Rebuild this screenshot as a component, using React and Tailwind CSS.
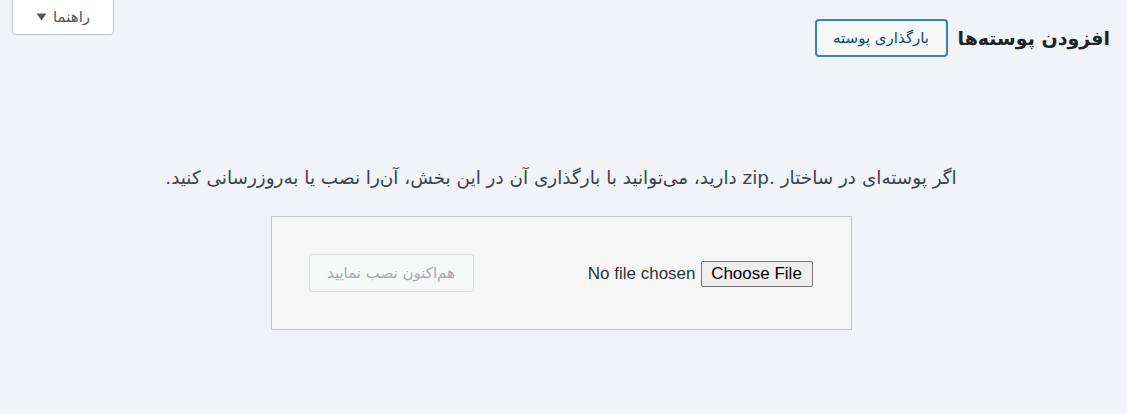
export default function App() {
  return (
    <div dir="rtl" className="w-[1127px] h-[414px] bg-[#f1f3f6] text-[#1d2327] overflow-hidden" style={{ fontFamily: '"DejaVu Sans", sans-serif' }}>
      <div className="flex items-start justify-between">
        <div className="flex items-center gap-[10px] mr-[17px] mt-[19px]">
          <h1 className="text-[19px] font-bold leading-[38px] text-[#1d2327]">افزودن پوسته‌ها</h1>
          <button className="h-[38px] w-[133px] border-2 border-[#3582c4] rounded-[4px] bg-[#f6f7f7] text-[#0a4b78] text-[15px] leading-none flex items-center justify-center">بارگذاری پوسته</button>
        </div>
        <button className="ml-[12px] w-[102px] h-[35px] bg-white border border-[#c3c4c7] border-t-0 rounded-b-[4px] flex items-center justify-center gap-[6px] text-[15px] text-[#50575e]">
          <span>راهنما</span>
          <svg width="11" height="8" viewBox="0 0 11 8"><path d="M0.5 0.5 L10.5 0.5 L5.5 7.5 Z" fill="#50575e" /></svg>
        </button>
      </div>
      <div className="pr-[5px]">
        <p className="mt-[109px] text-center text-[18.4px] text-[#3c434a] leading-[24px]">اگر پوسته‌ای در ساختار .zip دارید، می‌توانید با بارگذاری آن در این بخش، آن‌را نصب یا به‌روزرسانی کنید.</p>
        <div className="mx-auto mt-[26px] w-[581px] h-[114px] bg-[#f6f6f6] border border-[#c3c4c7] flex items-center justify-between pr-[38px] pl-[37px]">
          <div dir="ltr" className="flex items-center gap-[5px] mt-[2px]" style={{ fontFamily: '"Liberation Sans", Arial, sans-serif' }}>
            <span className="text-[17px] text-[#2c3338]">No file chosen</span>
            <span className="h-[26px] w-[112px] flex items-center justify-center border border-[#767676] rounded-[2px] bg-[#efefef] text-black text-[17px]">Choose File</span>
          </div>
          <button disabled className="h-[38px] w-[165px] border border-[#dcdcde] rounded-[3px] bg-[#f6f7f7] text-[#a7aaad] text-[15px]">هم‌اکنون نصب نمایید</button>
        </div>
      </div>
    </div>
  );
}
